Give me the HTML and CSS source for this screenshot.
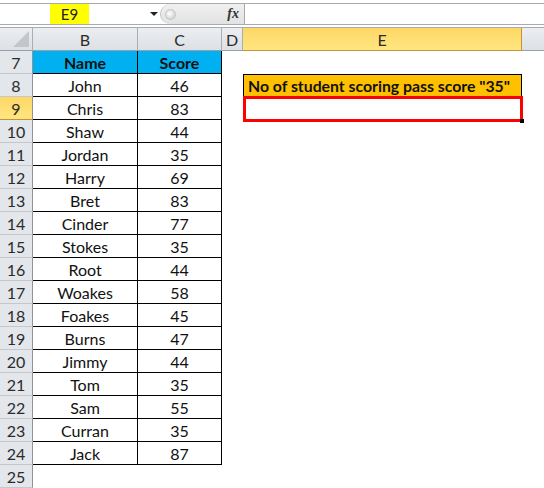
FILE: index.html
```html
<!DOCTYPE html>
<html>
<head>
<meta charset="utf-8">
<link rel="stylesheet" href="styles.css">
</head>
<body>
<div class="app">
  <div class="fbar">
    <div class="namebox"><span class="ref">E9</span></div>
    <div class="dd"><svg width="8" height="4" viewBox="0 0 8 4"><path d="M0 0H8L4 4Z" fill="#222"/></svg></div>
    <div class="fxzone">
      <span class="knob"></span>
      <span class="fx">fx</span>
    </div>
    <div class="finput"></div>
  </div>
  <div class="strip"></div>
  <div class="grid">
    <div class="corner"><svg width="26" height="16" viewBox="0 0 26 16"><path d="M26 0V16H10Z" fill="#c3c7cc"/></svg></div>
    <div class="ch">B</div>
    <div class="ch">C</div>
    <div class="ch">D</div>
    <div class="ch sel">E</div>
    <div class="ch last"></div>

    <div class="rh">7</div><div class="tc th">Name</div><div class="tc th">Score</div><div class="ec"></div><div class="ec"></div><div class="ec"></div>
    <div class="rh">8</div><div class="tc">John</div><div class="tc">46</div><div class="ec"></div><div class="ec label">No of student scoring pass score "35"</div><div class="ec"></div>
    <div class="rh rsel">9</div><div class="tc">Chris</div><div class="tc">83</div><div class="ec"></div><div class="ec active"></div><div class="ec"></div>
    <div class="rh">10</div><div class="tc">Shaw</div><div class="tc">44</div><div class="ec"></div><div class="ec"></div><div class="ec"></div>
    <div class="rh">11</div><div class="tc">Jordan</div><div class="tc">35</div><div class="ec"></div><div class="ec"></div><div class="ec"></div>
    <div class="rh">12</div><div class="tc">Harry</div><div class="tc">69</div><div class="ec"></div><div class="ec"></div><div class="ec"></div>
    <div class="rh">13</div><div class="tc">Bret</div><div class="tc">83</div><div class="ec"></div><div class="ec"></div><div class="ec"></div>
    <div class="rh">14</div><div class="tc">Cinder</div><div class="tc">77</div><div class="ec"></div><div class="ec"></div><div class="ec"></div>
    <div class="rh">15</div><div class="tc">Stokes</div><div class="tc">35</div><div class="ec"></div><div class="ec"></div><div class="ec"></div>
    <div class="rh">16</div><div class="tc">Root</div><div class="tc">44</div><div class="ec"></div><div class="ec"></div><div class="ec"></div>
    <div class="rh">17</div><div class="tc">Woakes</div><div class="tc">58</div><div class="ec"></div><div class="ec"></div><div class="ec"></div>
    <div class="rh">18</div><div class="tc">Foakes</div><div class="tc">45</div><div class="ec"></div><div class="ec"></div><div class="ec"></div>
    <div class="rh">19</div><div class="tc">Burns</div><div class="tc">47</div><div class="ec"></div><div class="ec"></div><div class="ec"></div>
    <div class="rh">20</div><div class="tc">Jimmy</div><div class="tc">44</div><div class="ec"></div><div class="ec"></div><div class="ec"></div>
    <div class="rh">21</div><div class="tc">Tom</div><div class="tc">35</div><div class="ec"></div><div class="ec"></div><div class="ec"></div>
    <div class="rh">22</div><div class="tc">Sam</div><div class="tc">55</div><div class="ec"></div><div class="ec"></div><div class="ec"></div>
    <div class="rh">23</div><div class="tc">Curran</div><div class="tc">35</div><div class="ec"></div><div class="ec"></div><div class="ec"></div>
    <div class="rh">24</div><div class="tc">Jack</div><div class="tc">87</div><div class="ec"></div><div class="ec"></div><div class="ec"></div>
    <div class="rh">25</div><div class="ec"></div><div class="ec"></div><div class="ec"></div><div class="ec"></div><div class="ec"></div>
  </div>
</div>
</body>
</html>
```
FILE: styles.css
```css
* { box-sizing: border-box; }
html, body { margin: 0; padding: 0; background: #fff; }
body { font-family: Lato, "Open Sans", sans-serif; width: 544px; height: 488px; overflow: hidden; }
.app { width: 544px; }

.fbar {
  margin-top: 3px;
  height: 22px;
  border-top: 1px solid #a7abb0;
  border-bottom: 1px solid #a7abb0;
  display: flex;
  align-items: stretch;
}
.namebox { width: 145px; display: flex; }
.ref {
  margin-left: 50px;
  width: 39px;
  background: #ffff00;
  font-size: 15px;
  color: #222;
  display: flex; align-items: center; justify-content: center;
}
.dd { width: 15px; display: flex; align-items: center; justify-content: center; padding-left: 2px; }
.fxzone {
  width: 85px;
  background: linear-gradient(#f0f0f0, #e2e2e2);
  border-left: 1px solid #c2c2c2;
  border-radius: 11px 0 0 11px;
  border-right: 1px solid #a7abb0;
  display: flex; align-items: center; justify-content: space-between;
  padding: 0 5px 0 4px;
}
.knob { width: 11px; height: 11px; border-radius: 50%; background: radial-gradient(circle at 40% 40%, #ffffff, #c4c4c4); border: 1px solid #c4c4c4; }
.fx { font-family: "Liberation Serif", serif; font-style: italic; font-weight: bold; font-size: 14px; color: #333; }
.finput { flex: 1; background: #fff; }

.strip { height: 3px; border-bottom: 1px solid #a7abb0; }

.grid {
  display: grid;
  grid-template-columns: 33px 105px 84px 21px 279px 22px;
  grid-auto-rows: 23px;
}
.corner {
  background: linear-gradient(#eceef1, #dde0e4);
  border-right: 1px solid #a8aeb6;
  border-bottom: 1px solid #9aa0a8;
  display: flex; align-items: flex-end; justify-content: flex-end;
  padding: 0 3px 3px 0;
}
.ch {
  background: linear-gradient(#eceef1, #dde0e4);
  border-right: 1px solid #a8aeb6;
  border-bottom: 1px solid #9aa0a8;
  display: flex; align-items: center; justify-content: center;
  font-size: 16px; color: #2b2b2b;
}
.ch.sel {
  background: linear-gradient(#fdd766, #ffe680);
  border-right: 1px solid #c5923a;
  border-bottom: 1px solid #c5923a;
}
.ch.last { border-right: none; }
.rh {
  background: #e3e6ea;
  border-right: 1px solid #8e949c;
  border-bottom: 1px solid #c3c8ce;
  display: flex; align-items: center; justify-content: center;
  font-size: 16px; color: #2b2b2b;
}
.rh.rsel { background: linear-gradient(#fdd766, #ffe680); border-bottom-color: #c5923a; }
.tc {
  border-right: 1px solid #000;
  border-bottom: 1px solid #000;
  display: flex; align-items: center; justify-content: center;
  font-size: 16px; color: #111;
}
.tc.th { background: #00b0f0; font-weight: bold; }
.ec { background: #fff; }
.label {
  background: #ffc000;
  border: 1px solid #000;
  font-weight: bold;
  font-size: 15.8px;
  color: #111;
  display: flex; align-items: center;
  padding-left: 4px;
  white-space: nowrap;
}
.active { position: relative; }
.active::before {
  content: "";
  position: absolute;
  top: -1px; left: 0; right: -1px; bottom: -2px;
  border: 3px solid #ff0000;
}
.active::after {
  content: "";
  position: absolute;
  right: -2px; bottom: -3px;
  width: 4px; height: 4px;
  background: #000;
}
```
